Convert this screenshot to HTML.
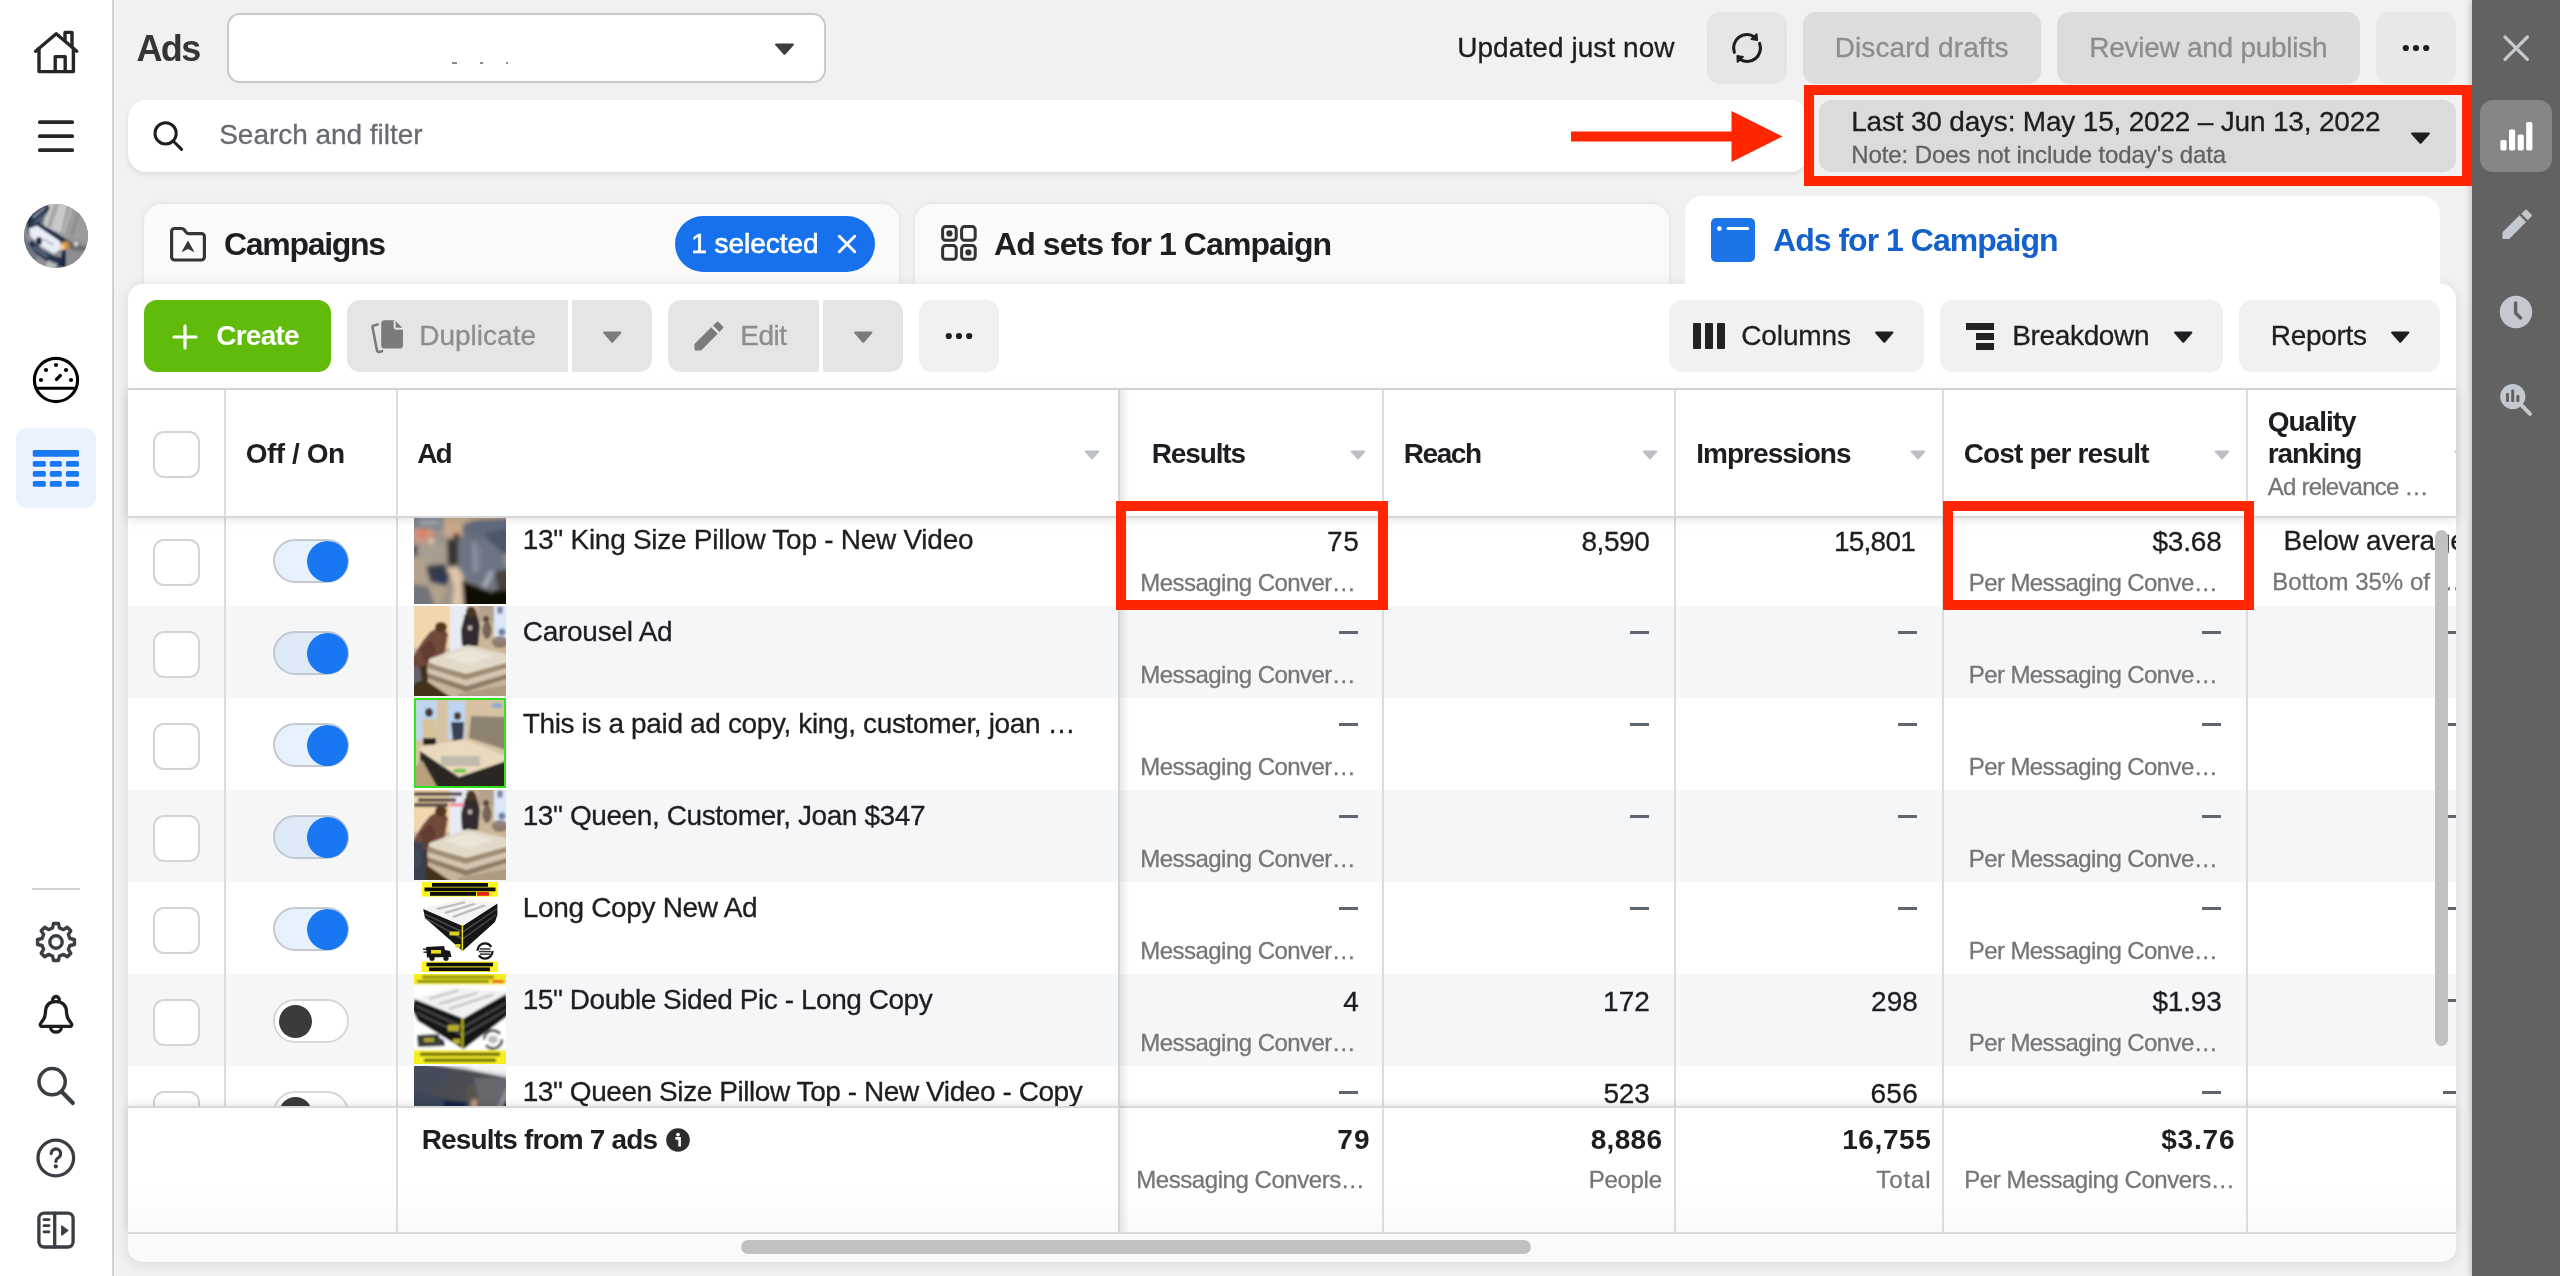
<!DOCTYPE html>
<html lang="en"><head><meta charset="utf-8"><title>Ads Manager</title>
<style>
html,body{margin:0;padding:0;background:#f1f1f1;width:2560px;height:1276px;overflow:hidden}
#root{position:relative;width:2560px;height:1276px;overflow:hidden;background:#f1f1f1;font-family:"Liberation Sans",sans-serif}
.b{position:absolute;display:block}
.t{position:absolute;white-space:pre;font-kerning:normal}
</style></head>
<body><div id="root">
<div class="b" style="left:227px;top:12.5px;width:599px;height:70.5px;background:#fff;border-radius:13px;border:2px solid #c9c9c9;box-sizing:border-box;"></div>
<svg class="b" style="left:774.0px;top:42.5px;" width="21" height="12.5" viewBox="0 0 21 12.5"><path d="M2.2 1.6 H18.8 L10.5 10.7 Z" fill="#3a3d42" stroke="#3a3d42" stroke-width="2.2" stroke-linejoin="round"/></svg>
<div class="b" style="left:452px;top:62px;width:5px;height:1.5px;background:#8a8a8a;"></div><div class="b" style="left:480px;top:62px;width:3px;height:1.5px;background:#8a8a8a;"></div><div class="b" style="left:506px;top:62px;width:2px;height:1.5px;background:#8a8a8a;"></div>
<div class="b" style="left:1707px;top:12px;width:80px;height:72px;background:#e5e5e5;border-radius:13px;"></div>
<svg class="b" style="left:1729px;top:30px;" width="36" height="36" viewBox="0 0 36 36"><g fill="none" stroke="#1e1e1e" stroke-width="3.1" stroke-linecap="round"><path d="M5.33 22.36 A13.4 13.4 0 0 1 25.6 6.9"/><path d="M30.59 13.42 A13.4 13.4 0 0 1 10.4 29.1"/></g><g fill="#1e1e1e" stroke="#1e1e1e" stroke-width="1.8" stroke-linejoin="round"><path d="M27.7 4.2 L28.2 10 L22.4 9.2 Z"/><path d="M8.3 26 L14 26.8 L8.6 31.9 Z"/></g></svg>
<div class="b" style="left:1803px;top:12px;width:238px;height:72px;background:#dcdcdc;border-radius:13px;"></div>
<div class="b" style="left:2057px;top:12px;width:303px;height:72px;background:#dcdcdc;border-radius:13px;"></div>
<div class="b" style="left:2376px;top:12px;width:80px;height:72px;background:#e8e8e8;border-radius:13px;"></div>
<svg class="b" style="left:2400px;top:44px;" width="32" height="8" viewBox="0 0 32 8"><circle cx="5.800000000000001" cy="4" r="3.1" fill="#1c1e21"/><circle cx="15.999999999999998" cy="4" r="3.1" fill="#1c1e21"/><circle cx="26.2" cy="4" r="3.1" fill="#1c1e21"/></svg>
<div class="b" style="left:128px;top:100px;width:1680px;height:72px;background:#fff;border-radius:18px;box-shadow:0 2px 5px rgba(0,0,0,.10);"></div>
<svg class="b" style="left:150px;top:118px;" width="36" height="36" viewBox="0 0 36 36"><g fill="none" stroke="#1c1e21" stroke-width="3" stroke-linecap="round"><circle cx="15.6" cy="15.4" r="10.6"/><path d="M23.4 23.2 L31.6 31.4"/></g></svg>
<div class="b" style="left:1819px;top:100px;width:637px;height:72px;background:#dbdbdb;border-radius:13px;"></div>
<svg class="b" style="left:2409.5px;top:132px;" width="21" height="12.5" viewBox="0 0 21 12.5"><path d="M2.2 1.6 H18.8 L10.5 10.7 Z" fill="#1c1e21" stroke="#1c1e21" stroke-width="2.2" stroke-linejoin="round"/></svg>
<div class="b" style="left:144px;top:204px;width:755px;height:90px;background:linear-gradient(#fafafa 0,#fafafa 82%,#f3f3f3 100%);border-radius:18px 18px 0 0;box-shadow:0 0 6px rgba(0,0,0,.08);"></div>
<div class="b" style="left:915px;top:204px;width:754px;height:90px;background:linear-gradient(#fafafa 0,#fafafa 82%,#f3f3f3 100%);border-radius:18px 18px 0 0;box-shadow:0 0 6px rgba(0,0,0,.08);"></div>
<div class="b" style="left:128px;top:284px;width:2328px;height:978px;background:#fff;border-radius:15px;box-shadow:0 2px 14px rgba(0,0,0,.10);"></div>
<div class="b" style="left:1685px;top:196px;width:755px;height:100px;background:#fff;border-radius:18px 18px 0 0;"></div>
<svg class="b" style="left:168px;top:225px;" width="40" height="38" viewBox="0 0 40 38"><g fill="none" stroke="#363636" stroke-width="3.2" stroke-linejoin="round"><path d="M3.6 6.5 a3 3 0 0 1 3-3 h7.2 a3 3 0 0 1 2.4 1.2 l2 2.7 a3 3 0 0 0 2.4 1.2 h12.8 a3 3 0 0 1 3 3 v20.4 a3 3 0 0 1 -3 3 H6.6 a3 3 0 0 1 -3 -3 Z"/></g><path d="M20 15.4 L26.6 27.2 L20 24 L13.4 27.2 Z" fill="#363636"/></svg>
<div class="b" style="left:675px;top:216px;width:200px;height:56px;background:#1771ed;border-radius:28px;"></div>
<svg class="b" style="left:836px;top:233px;" width="22" height="22" viewBox="0 0 22 22"><path d="M3.3 3.3 L18.7 18.7 M18.7 3.3 L3.3 18.7" stroke="#fff" stroke-width="3" stroke-linecap="round"/></svg>
<svg class="b" style="left:940.5px;top:225px;" width="38" height="38" viewBox="0 0 38 38"><rect x="1.6" y="1.6" width="13.6" height="13.6" rx="3" fill="none" stroke="#333" stroke-width="3"/><circle cx="8.4" cy="8.4" r="3.1" fill="#333"/><rect x="20.6" y="1.6" width="13.6" height="13.6" rx="3" fill="none" stroke="#333" stroke-width="3"/><rect x="1.6" y="20.6" width="13.6" height="13.6" rx="3" fill="none" stroke="#333" stroke-width="3"/><rect x="20.6" y="20.6" width="13.6" height="13.6" rx="3" fill="none" stroke="#333" stroke-width="3"/><circle cx="27.400000000000002" cy="27.400000000000002" r="3.1" fill="#333"/></svg>
<div class="b" style="left:1711px;top:218px;width:44px;height:44px;background:#1b74e8;border-radius:5px;"></div>
<svg class="b" style="left:1711px;top:218px;" width="44" height="44" viewBox="0 0 44 44"><circle cx="8.4" cy="10.6" r="2.4" fill="#fff"/><path d="M17 10.6 H36.6" stroke="#fff" stroke-width="3" stroke-linecap="round"/></svg>
<div class="b" style="left:144px;top:300px;width:187px;height:72px;background:#60bb0b;border-radius:13px;"></div>
<svg class="b" style="left:172px;top:324px;" width="26" height="26" viewBox="0 0 26 26"><path d="M13 2 V24 M2 13 H24" stroke="#fff" stroke-width="3.2" stroke-linecap="round"/></svg>
<div class="b" style="left:347px;top:300px;width:221px;height:72px;background:#e5e5e5;border-radius:13px 2px 2px 13px;"></div>
<div class="b" style="left:572px;top:300px;width:80px;height:72px;background:#e5e5e5;border-radius:2px 13px 13px 2px;"></div>
<svg class="b" style="left:369.8px;top:316.7px;" width="38" height="38" viewBox="0 0 38 38"><g fill="#7b7b7b"><path d="M14.6 3.2 h10.2 l8.2 8.2 v16.8 a3.4 3.4 0 0 1 -3.4 3.4 h-15 a3.4 3.4 0 0 1 -3.4 -3.4 v-21.6 a3.4 3.4 0 0 1 3.4 -3.4 z"/></g><path d="M24.6 3.4 v6 a2.4 2.4 0 0 0 2.4 2.4 h6" fill="none" stroke="#e5e5e5" stroke-width="2"/><path d="M7.6 7.4 L4 8.4 a2 2 0 0 0 -1.4 2.4 L7 33.4 a2 2 0 0 0 2.4 1.5 L12 34.2" fill="none" stroke="#7b7b7b" stroke-width="2.6" stroke-linecap="round"/></svg>
<svg class="b" style="left:601.55px;top:330.5px;" width="20.5" height="12.5" viewBox="0 0 20.5 12.5"><path d="M2.2 1.6 H18.3 L10.25 10.7 Z" fill="#7b7b7b" stroke="#7b7b7b" stroke-width="2.2" stroke-linejoin="round"/></svg>
<div class="b" style="left:668px;top:300px;width:151px;height:72px;background:#e5e5e5;border-radius:13px 2px 2px 13px;"></div>
<div class="b" style="left:823px;top:300px;width:80px;height:72px;background:#e5e5e5;border-radius:2px 13px 13px 2px;"></div>
<svg class="b" style="left:693.5px;top:320.5px;" width="30" height="30" viewBox="0 0 30 30"><g fill="#7b7b7b"><path d="M19 4.6 L22.47 1.13 Q23.6 0 24.73 1.13 L28.82 5.22 Q29.95 6.35 28.82 7.48 L25.35 10.95 Z"/><path d="M17.2 6.2 L23.73 12.73 L7.6 28.9 Q7 29.45 6.2 29.45 L1.5 29.45 Q0.5 29.45 0.5 28.45 L0.5 23.5 Q0.5 22.9 1 22.4 Z"/></g></svg>
<svg class="b" style="left:852.75px;top:330.5px;" width="20.5" height="12.5" viewBox="0 0 20.5 12.5"><path d="M2.2 1.6 H18.3 L10.25 10.7 Z" fill="#7b7b7b" stroke="#7b7b7b" stroke-width="2.2" stroke-linejoin="round"/></svg>
<div class="b" style="left:919px;top:300px;width:80px;height:72px;background:#f1f1f1;border-radius:13px;"></div>
<svg class="b" style="left:943px;top:332px;" width="32" height="8" viewBox="0 0 32 8"><circle cx="5.800000000000001" cy="4" r="3.1" fill="#1c1e21"/><circle cx="15.999999999999998" cy="4" r="3.1" fill="#1c1e21"/><circle cx="26.2" cy="4" r="3.1" fill="#1c1e21"/></svg>
<div class="b" style="left:1669px;top:300px;width:255px;height:72px;background:#f1f1f1;border-radius:13px;"></div>
<div class="b" style="left:1693px;top:323px;width:8.4px;height:26px;background:#222;border-radius:1px;"></div><div class="b" style="left:1704.8px;top:323px;width:8.4px;height:26px;background:#222;border-radius:1px;"></div><div class="b" style="left:1716.6px;top:323px;width:8.4px;height:26px;background:#222;border-radius:1px;"></div>
<svg class="b" style="left:1873.75px;top:330.5px;" width="20.5" height="12.5" viewBox="0 0 20.5 12.5"><path d="M2.2 1.6 H18.3 L10.25 10.7 Z" fill="#1c1e21" stroke="#1c1e21" stroke-width="2.2" stroke-linejoin="round"/></svg>
<div class="b" style="left:1940px;top:300px;width:283px;height:72px;background:#f1f1f1;border-radius:13px;"></div>
<div class="b" style="left:1966px;top:322.5px;width:28px;height:7.4px;background:#222;"></div><div class="b" style="left:1976px;top:333px;width:18px;height:7.2px;background:#222;"></div><div class="b" style="left:1976px;top:343px;width:18px;height:7.2px;background:#222;"></div>
<svg class="b" style="left:2172.55px;top:330.5px;" width="20.5" height="12.5" viewBox="0 0 20.5 12.5"><path d="M2.2 1.6 H18.3 L10.25 10.7 Z" fill="#1c1e21" stroke="#1c1e21" stroke-width="2.2" stroke-linejoin="round"/></svg>
<div class="b" style="left:2239px;top:300px;width:201px;height:72px;background:#f1f1f1;border-radius:13px;"></div>
<svg class="b" style="left:2389.55px;top:330.5px;" width="20.5" height="12.5" viewBox="0 0 20.5 12.5"><path d="M2.2 1.6 H18.3 L10.25 10.7 Z" fill="#1c1e21" stroke="#1c1e21" stroke-width="2.2" stroke-linejoin="round"/></svg>
<div class="b" style="left:128px;top:388px;width:2328px;height:2px;background:#d8d8d8;"></div>
<div class="b" style="left:0;top:0;width:2456px;height:1106px;overflow:hidden;will-change:transform"><div class="b" style="left:128px;top:606px;width:2328px;height:92px;background:#f5f6f7;"></div><div class="b" style="left:128px;top:790px;width:2328px;height:92px;background:#f5f6f7;"></div><div class="b" style="left:128px;top:974px;width:2328px;height:92px;background:#f5f6f7;"></div><div class="b" style="left:223.5px;top:390px;width:2px;height:842px;background:#dcdcdc;"></div><div class="b" style="left:395.5px;top:390px;width:2px;height:842px;background:#dcdcdc;"></div><div class="b" style="left:1382px;top:390px;width:2px;height:842px;background:#dcdcdc;"></div><div class="b" style="left:1674px;top:390px;width:2px;height:842px;background:#dcdcdc;"></div><div class="b" style="left:1942px;top:390px;width:2px;height:842px;background:#dcdcdc;"></div><div class="b" style="left:2245.5px;top:390px;width:2px;height:842px;background:#dcdcdc;"></div><div class="b" style="left:152.5px;top:538.5px;width:47px;height:47px;background:#fff;border-radius:11px;border:2px solid #d4d4d4;box-sizing:border-box;"></div><div class="b" style="left:273px;top:539px;width:76px;height:44px;background:rgba(24,119,242,.10);border-radius:22px;border:2px solid #c3c8d0;box-sizing:border-box;"></div><div class="b" style="left:306.5px;top:540.5px;width:41px;height:41px;background:#1877f2;border-radius:21px;"></div><div class="b" style="left:414px;top:514px;width:92px;height:90px;overflow:hidden"><svg width="92" height="90" viewBox="0 0 92 90" style="display:block"><defs><filter id="bf1" x="-10%" y="-10%" width="120%" height="120%"><feGaussianBlur stdDeviation="1.9"/></filter></defs><rect width="92" height="90" fill="#888"/><g filter="url(#bf1)"><rect x="-4" y="-4" width="100" height="98" fill="#9d938a"/><rect x="-4" y="-4" width="32" height="20" fill="#80878f"/><path d="M4 6 L24 4 L26 10 L8 12 Z" fill="#a3a8ae" opacity="0.8"/><rect x="-4" y="15" width="24" height="14" fill="#c6957e"/><ellipse cx="8.5" cy="19" rx="4.5" ry="3.4" fill="#ee7362" opacity="0.9"/><ellipse cx="17.3" cy="27.3" rx="2.4" ry="2" fill="#e8decd"/><rect x="30" y="-4" width="18" height="27" fill="#c8a98a"/><rect x="46" y="-4" width="50" height="14" fill="#c7aa8c"/><path d="M49 10 L60 6 L96 4 L96 40 L49 38 Z" fill="#616b7c"/><path d="M72 18 L96 14 L96 40 L76 40 Z" fill="#4e5769"/><rect x="-4" y="29" width="36" height="20" fill="#a99d91"/><rect x="-4" y="31" width="8" height="11" fill="#5b5d62"/><path d="M-4 46 L12 44 L34 72 L24 94 L-4 94 Z" fill="#b3a08e"/><path d="M-4 70 L14 72 L22 94 L-4 94 Z" fill="#727479"/><path d="M33 26 L47 23 L50 50 L34 53 Z" fill="#38362f"/><ellipse cx="42.4" cy="21.6" rx="3.4" ry="2.8" fill="#6a3f30"/><path d="M44 26 L56 22 L74 26 L90 40 L92 60 L78 78 L52 66 L44 50 Z" fill="#6d7484"/><path d="M58.6 29 L62 29 L63 58 L59.6 59 Z" fill="#9da3ad" opacity="0.85"/><path d="M64 33 L66.6 33 L67.6 56 L65 56 Z" fill="#878e9a" opacity="0.7"/><path d="M76 56 L80 58 L72 75 L68 72 Z" fill="#aeb2ba" opacity="0.9"/><path d="M12 52 L30 50 L36 62 L32 72 L16 68 Z" fill="#353b4b"/><ellipse cx="29" cy="66" rx="5" ry="4" fill="#2b3b5e"/><path d="M33 54 L42 53 L48 60 L50 72 L52 94 L38 94 L40 72 L36 62 Z" fill="#dcc5aa"/><path d="M48 66 L78 78 L84 74 L96 72 L96 96 L50 96 Z" fill="#0b0906"/><path d="M81 58 L96 54 L96 76 L84 77 Z" fill="#4b4139"/></g></svg></div><div class="b" style="left:152.5px;top:630.5px;width:47px;height:47px;background:#fff;border-radius:11px;border:2px solid #d4d4d4;box-sizing:border-box;"></div><div class="b" style="left:273px;top:631px;width:76px;height:44px;background:rgba(24,119,242,.10);border-radius:22px;border:2px solid #c3c8d0;box-sizing:border-box;"></div><div class="b" style="left:306.5px;top:632.5px;width:41px;height:41px;background:#1877f2;border-radius:21px;"></div><div class="b" style="left:414px;top:606px;width:92px;height:90px;overflow:hidden"><svg width="92" height="90" viewBox="0 0 92 90" style="display:block"><defs><filter id="bf2" x="-10%" y="-10%" width="120%" height="120%"><feGaussianBlur stdDeviation="1.3"/></filter></defs><rect width="92" height="90" fill="#888"/><g filter="url(#bf2)"><rect x="-4" y="-4" width="100" height="98" fill="#cbb698"/><rect x="-4" y="-4" width="42" height="46" fill="#f1d6ae"/><rect x="36" y="-4" width="17" height="50" fill="#e7ebf4"/><rect x="64" y="-4" width="18" height="20" fill="#b5a28d"/><rect x="80" y="-4" width="16" height="40" fill="#dbe7f6"/><ellipse cx="88" cy="26" rx="3.6" ry="3.6" fill="#566a94" opacity="0.8"/><ellipse cx="86" cy="4" rx="3" ry="4" fill="#6a5a8a" opacity="0.7"/><path d="M51 8 L62 5 L66 20 L64 40 L48 40 L47 24 Z" fill="#302c2f"/><ellipse cx="57" cy="6" rx="5" ry="5.4" fill="#4a3628"/><ellipse cx="56" cy="22" rx="2.4" ry="2.4" fill="#d8d0c8" opacity="0.8"/><ellipse cx="73" cy="24" rx="4.6" ry="9" fill="#6a5a50" opacity="0.9"/><ellipse cx="72" cy="13" rx="3" ry="3" fill="#4a3a30" opacity="0.9"/><ellipse cx="86" cy="36" rx="8" ry="6" fill="#7d6c60" opacity="0.8"/><path d="M-2 52 L8 36 L16 26 L28 19 L34 28 L31 46 L20 58 L4 70 L-4 72 Z" fill="#71483a"/><ellipse cx="27" cy="21" rx="6" ry="5" fill="#55361f"/><path d="M6 44 L16 34 L22 44 L12 58 Z" fill="#5a3428" opacity="0.7"/><path d="M15 53 L54 39 L96 49 L96 56 L52 68 L15 57 Z" fill="#e2d9c8"/><path d="M30 50 L54 43 L80 50 L54 58 Z" fill="#efe9de" opacity="0.7"/><path d="M13 57 L52 68 L96 56 L96 61 L52 74 L13 62 Z" fill="#9f8c74"/><path d="M13 62 L52 74 L96 61 L96 67 L52 80 L13 67 Z" fill="#d3c6b1"/><path d="M13 67 L52 80 L96 67 L96 72 L52 86 L13 72 Z" fill="#8f7d66"/><path d="M13 72 L52 86 L96 72 L96 96 L12 96 Z" fill="#c6b59c"/><path d="M44 88 L96 78 L96 96 L44 96 Z" fill="#a8957c" opacity="0.8"/><path d="M-4 66 L13 58 L14 76 L44 96 L-4 96 Z" fill="#43331f"/><path d="M-4 60 L6 62 L8 74 L-4 80 Z" fill="#6b6f7c" opacity="0.8"/></g></svg></div><div class="b" style="left:152.5px;top:722.5px;width:47px;height:47px;background:#fff;border-radius:11px;border:2px solid #d4d4d4;box-sizing:border-box;"></div><div class="b" style="left:273px;top:723px;width:76px;height:44px;background:rgba(24,119,242,.10);border-radius:22px;border:2px solid #c3c8d0;box-sizing:border-box;"></div><div class="b" style="left:306.5px;top:724.5px;width:41px;height:41px;background:#1877f2;border-radius:21px;"></div><div class="b" style="left:414px;top:698px;width:92px;height:90px;overflow:hidden"><svg width="92" height="90" viewBox="0 0 92 90" style="display:block"><defs><filter id="bf3" x="-10%" y="-10%" width="120%" height="120%"><feGaussianBlur stdDeviation="1.1"/></filter></defs><rect width="92" height="90" fill="#888"/><g filter="url(#bf3)"><rect x="-4" y="-4" width="100" height="98" fill="#d6c2a2"/><rect x="2" y="2" width="21" height="40" fill="#bdd7f3"/><rect x="34" y="3" width="17" height="38" fill="#bdd7f3"/><path d="M57 18 L92 19 L92 52 L55 40 Z" fill="#8e8271"/><rect x="78" y="5" width="10" height="5" fill="#7aa6d8" opacity="0.8"/><ellipse cx="15" cy="14.5" rx="4" ry="4.5" fill="#4a3a30"/><path d="M8 21 L22 21 L23 40 L9 41 Z" fill="#d8c298"/><rect x="9" y="40" width="13" height="7" fill="#28221e"/><ellipse cx="43.5" cy="18" rx="3.6" ry="4" fill="#4a3a30"/><path d="M37 24 L50 24 L49 44 L39 44 Z" fill="#3a4152"/><path d="M6 49 L50 41 L92 58 L92 63 L45 79 L6 53 Z" fill="#ead9bd"/><path d="M6 53 L45 79 L92 63 L92 94 L22 94 L6 66 Z" fill="#2c2822"/><path d="M0 70 L8 62 L26 94 L0 94 Z" fill="#b7a07a"/><rect x="27" y="58" width="39" height="10" fill="#bdb7ad" opacity="0.9"/><rect x="40" y="71" width="12" height="3.4" fill="#44c52c"/></g><rect x="1" y="1" width="90" height="88" fill="none" stroke="#2fe41c" stroke-width="2"/></svg></div><div class="b" style="left:152.5px;top:814.5px;width:47px;height:47px;background:#fff;border-radius:11px;border:2px solid #d4d4d4;box-sizing:border-box;"></div><div class="b" style="left:273px;top:815px;width:76px;height:44px;background:rgba(24,119,242,.10);border-radius:22px;border:2px solid #c3c8d0;box-sizing:border-box;"></div><div class="b" style="left:306.5px;top:816.5px;width:41px;height:41px;background:#1877f2;border-radius:21px;"></div><div class="b" style="left:414px;top:790px;width:92px;height:90px;overflow:hidden"><svg width="92" height="90" viewBox="0 0 92 90" style="display:block"><defs><filter id="bf4" x="-10%" y="-10%" width="120%" height="120%"><feGaussianBlur stdDeviation="1.3"/></filter></defs><rect width="92" height="90" fill="#888"/><g filter="url(#bf4)"><rect x="-4" y="-4" width="100" height="98" fill="#cbb698"/><rect x="-4" y="-4" width="42" height="46" fill="#f1d6ae"/><rect x="36" y="-4" width="17" height="50" fill="#e7ebf4"/><rect x="64" y="-4" width="18" height="20" fill="#b5a28d"/><rect x="80" y="-4" width="16" height="40" fill="#dbe7f6"/><ellipse cx="88" cy="26" rx="3.6" ry="3.6" fill="#566a94" opacity="0.8"/><ellipse cx="86" cy="4" rx="3" ry="4" fill="#6a5a8a" opacity="0.7"/><path d="M51 8 L62 5 L66 20 L64 40 L48 40 L47 24 Z" fill="#302c2f"/><ellipse cx="57" cy="6" rx="5" ry="5.4" fill="#4a3628"/><ellipse cx="56" cy="22" rx="2.4" ry="2.4" fill="#d8d0c8" opacity="0.8"/><ellipse cx="73" cy="24" rx="4.6" ry="9" fill="#6a5a50" opacity="0.9"/><ellipse cx="72" cy="13" rx="3" ry="3" fill="#4a3a30" opacity="0.9"/><ellipse cx="86" cy="36" rx="8" ry="6" fill="#7d6c60" opacity="0.8"/><path d="M-2 52 L8 36 L16 26 L28 19 L34 28 L31 46 L20 58 L4 70 L-4 72 Z" fill="#71483a"/><ellipse cx="27" cy="21" rx="6" ry="5" fill="#55361f"/><path d="M6 44 L16 34 L22 44 L12 58 Z" fill="#5a3428" opacity="0.7"/><path d="M15 53 L54 39 L96 49 L96 56 L52 68 L15 57 Z" fill="#e2d9c8"/><path d="M30 50 L54 43 L80 50 L54 58 Z" fill="#efe9de" opacity="0.7"/><path d="M13 57 L52 68 L96 56 L96 61 L52 74 L13 62 Z" fill="#9f8c74"/><path d="M13 62 L52 74 L96 61 L96 67 L52 80 L13 67 Z" fill="#d3c6b1"/><path d="M13 67 L52 80 L96 67 L96 72 L52 86 L13 72 Z" fill="#8f7d66"/><path d="M13 72 L52 86 L96 72 L96 96 L12 96 Z" fill="#c6b59c"/><path d="M44 88 L96 78 L96 96 L44 96 Z" fill="#a8957c" opacity="0.8"/><path d="M-4 66 L13 58 L14 76 L44 96 L-4 96 Z" fill="#43331f"/><path d="M-4 60 L6 62 L8 74 L-4 80 Z" fill="#6b6f7c" opacity="0.8"/><rect x="0" y="2" width="48" height="4" fill="#4c4138" opacity="0.9"/><rect x="4" y="8" width="38" height="4" fill="#4c4138" opacity="0.9"/><rect x="0" y="13" width="34" height="4" fill="#4c4138" opacity="0.9"/><rect x="36" y="13" width="14" height="3.5" fill="#f08aa0"/><path d="M-4 52 L10 52 L12 96 L-4 96 Z" fill="#3b4254" opacity="0.9"/></g></svg></div><div class="b" style="left:152.5px;top:906.5px;width:47px;height:47px;background:#fff;border-radius:11px;border:2px solid #d4d4d4;box-sizing:border-box;"></div><div class="b" style="left:273px;top:907px;width:76px;height:44px;background:rgba(24,119,242,.10);border-radius:22px;border:2px solid #c3c8d0;box-sizing:border-box;"></div><div class="b" style="left:306.5px;top:908.5px;width:41px;height:41px;background:#1877f2;border-radius:21px;"></div><div class="b" style="left:414px;top:882px;width:92px;height:90px;overflow:hidden"><svg width="92" height="90" viewBox="0 0 92 90" style="display:block"><defs><filter id="bf5"><feGaussianBlur stdDeviation="0.45"/></filter></defs><g filter="url(#bf5)"><rect x="0" y="0" width="92" height="90" fill="#fff"/><rect x="7.7" y="0" width="76.4" height="14.6" fill="#fcf51d"/><rect x="18" y="1.0" width="56" height="3.8" fill="#111"/><rect x="10.5" y="5.5" width="71" height="3.8" fill="#111"/><rect x="16" y="10.0" width="46" height="3.8" fill="#111"/><rect x="63" y="10.0" width="12" height="3.8" fill="#e8200c"/><path d="M9.2 27 L48.7 44 L83.4 21.5 L83.4 33 L81 40 L48.7 69 L11 36 Z" fill="#141414"/><path d="M9.2 26.4 L49.4 16.7 L83.4 21.1 L48.7 43.5 Z" fill="#f3f3f3"/><path d="M22 26 L50 19.5 L52 21 L24 28 Z" fill="#bdbdbd"/><path d="M30 30 L60 21 L62 22.6 L32 32 Z" fill="#bdbdbd"/><path d="M38 34 L70 22.4 L72 24 L40 36 Z" fill="#bdbdbd"/><path d="M10 31 L48.7 49 L83 26 L83 27.4 L48.7 51 L10 32.6 Z" fill="#4a4a4a"/><path d="M11 35 L48.7 56 L82 32 L82 33.4 L48.7 58 L11 36.6 Z" fill="#4a4a4a"/><rect x="47.6" y="42.7" width="1.5" height="26" fill="#e8de1a"/><rect x="35.5" y="49.5" width="10" height="4" fill="#d9cf1c"/><rect x="41.5" y="62" width="5" height="3.6" fill="#d9cf1c"/><path d="M12 65 L30 64 L31 68 L36 69 L37.5 75 L13 75.6 Z" fill="#151515"/><ellipse cx="18" cy="76.2" rx="2.6" ry="2.6" fill="#151515"/><ellipse cx="32" cy="76.2" rx="2.6" ry="2.6" fill="#151515"/><rect x="9" y="66.5" width="6" height="1.3" fill="#151515"/><rect x="9.5" y="69.5" width="5" height="1.3" fill="#151515"/><rect x="17" y="68" width="10" height="3.6" fill="#e8de1a"/><circle cx="71" cy="69" r="7.6" fill="none" stroke="#151515" stroke-width="2.2" stroke-dasharray="19 5"/><rect x="65.6" y="66.2" width="10.8" height="1.5" fill="#333"/><rect x="65" y="68.8" width="12" height="1.5" fill="#333"/><rect x="66" y="71.4" width="10" height="1.5" fill="#333"/><rect x="7.7" y="79.5" width="76.4" height="10.5" fill="#fcf51d"/><rect x="12.5" y="80.7" width="66.5" height="3.7" fill="#111"/><rect x="15" y="85.4" width="61" height="3.7" fill="#111"/></g></svg></div><div class="b" style="left:152.5px;top:998.5px;width:47px;height:47px;background:#fff;border-radius:11px;border:2px solid #d4d4d4;box-sizing:border-box;"></div><div class="b" style="left:273px;top:999px;width:76px;height:44px;background:#fff;border-radius:22px;border:2px solid #d7d7d7;box-sizing:border-box;"></div><div class="b" style="left:279px;top:1004.5px;width:33px;height:33px;background:#3b3b3b;border-radius:17px;"></div><div class="b" style="left:414px;top:974px;width:92px;height:90px;overflow:hidden"><svg width="92" height="90" viewBox="0 0 92 90" style="display:block"><defs><filter id="bf6" x="-10%" y="-10%" width="120%" height="120%"><feGaussianBlur stdDeviation="1.0"/></filter></defs><rect width="92" height="90" fill="#888"/><g filter="url(#bf6)"><rect x="-4" y="-4" width="100" height="98" fill="#fff"/><rect x="-4" y="-4" width="100" height="14.6" fill="#f5ef22"/><rect x="8" y="1.6" width="72" height="3" fill="#8a8612"/><rect x="3" y="6" width="72" height="3" fill="#8a8612"/><rect x="78" y="6" width="12" height="3" fill="#e8452c"/><path d="M0.3 25 L49.4 44.5 L92 18.5 L96 40 L49.4 75.2 L4 47 L-2 35 Z" fill="#161616"/><path d="M0.3 24.6 L39 13.4 L96 17.9 L49.4 43.9 Z" fill="#f2f2f2"/><path d="M14 24 L44 15.5 L46 17 L16 26 Z" fill="#c4c4c4"/><path d="M24 29 L62 18 L64 20 L26 31 Z" fill="#c4c4c4"/><path d="M34 34 L78 19.6 L80 21.4 L36 36 Z" fill="#c4c4c4"/><path d="M2 31 L49.4 52 L94 27 L94 29 L49.4 54.4 L2 33 Z" fill="#4c4c4c"/><path d="M3 38 L49.4 60 L94 34 L94 36 L49.4 62.4 L3 40 Z" fill="#4c4c4c"/><rect x="47.4" y="44" width="2" height="31" fill="#c9c11c"/><rect x="34" y="51" width="11" height="6" fill="#b5ae2a"/><rect x="39" y="65" width="7" height="5" fill="#b5ae2a"/><path d="M3 61 L24 60 L26 64 L30 66 L31 72 L4 73 Z" fill="#3c3c3c"/><rect x="10" y="64" width="10" height="4" fill="#a59f2c"/><circle cx="79" cy="65.5" r="9" fill="none" stroke="#5a5a5a" stroke-width="3" stroke-dasharray="22 6"/><ellipse cx="79" cy="65.5" rx="5" ry="4" fill="#bdbdbd"/><rect x="-4" y="76" width="100" height="18" fill="#f5ef22"/><rect x="6" y="78.6" width="80" height="3.4" fill="#6e6a10"/><rect x="10" y="84.6" width="72" height="3.4" fill="#6e6a10"/></g></svg></div><div class="b" style="left:152.5px;top:1090.5px;width:47px;height:47px;background:#fff;border-radius:11px;border:2px solid #d4d4d4;box-sizing:border-box;"></div><div class="b" style="left:273px;top:1091px;width:76px;height:44px;background:#fff;border-radius:22px;border:2px solid #d7d7d7;box-sizing:border-box;"></div><div class="b" style="left:279px;top:1096.5px;width:33px;height:33px;background:#3b3b3b;border-radius:17px;"></div><div class="b" style="left:414px;top:1066px;width:92px;height:90px;overflow:hidden"><svg width="92" height="90" viewBox="0 0 92 90" style="display:block"><defs><filter id="bf7" x="-10%" y="-10%" width="120%" height="120%"><feGaussianBlur stdDeviation="1.6"/></filter></defs><rect width="92" height="90" fill="#888"/><g filter="url(#bf7)"><rect x="-4" y="-4" width="100" height="98" fill="#4b4d53"/><path d="M-4 -4 L40 -4 L30 20 L-4 34 Z" fill="#454c59"/><path d="M-4 24 L30 32 L52 44 L-4 44 Z" fill="#3b4659"/><path d="M14 -2 L50 3 L96 12 L96 -4 L14 -6 Z" fill="#dfe2e8"/><path d="M44 -4 L96 -4 L96 7 L60 3 Z" fill="#f6f6f6"/><path d="M60 12 L96 12 L96 44 L66 44 Z" fill="#66686d"/><path d="M30 34 L52 36 L54 46 L28 46 Z" fill="#172748"/><ellipse cx="60" cy="37" rx="3.6" ry="5" fill="#c9a68a"/><ellipse cx="58" cy="28" rx="7" ry="9" fill="#6a5848" opacity="0.45"/><path d="M82 44 L92 22 L96 24 L96 44 Z" fill="#8e9094"/><path d="M86 44 L94 32 L96 44 Z" fill="#151515"/></g></svg></div><div class="b" style="left:1339px;top:631px;width:19px;height:3px;background:#5f6670;"></div><div class="b" style="left:1630px;top:631px;width:19px;height:3px;background:#5f6670;"></div><div class="b" style="left:1898px;top:631px;width:19px;height:3px;background:#5f6670;"></div><div class="b" style="left:2202px;top:631px;width:19px;height:3px;background:#5f6670;"></div><div class="b" style="left:2443px;top:631px;width:19px;height:3px;background:#5f6670;"></div><div class="b" style="left:1339px;top:723px;width:19px;height:3px;background:#5f6670;"></div><div class="b" style="left:1630px;top:723px;width:19px;height:3px;background:#5f6670;"></div><div class="b" style="left:1898px;top:723px;width:19px;height:3px;background:#5f6670;"></div><div class="b" style="left:2202px;top:723px;width:19px;height:3px;background:#5f6670;"></div><div class="b" style="left:2443px;top:723px;width:19px;height:3px;background:#5f6670;"></div><div class="b" style="left:1339px;top:815px;width:19px;height:3px;background:#5f6670;"></div><div class="b" style="left:1630px;top:815px;width:19px;height:3px;background:#5f6670;"></div><div class="b" style="left:1898px;top:815px;width:19px;height:3px;background:#5f6670;"></div><div class="b" style="left:2202px;top:815px;width:19px;height:3px;background:#5f6670;"></div><div class="b" style="left:2443px;top:815px;width:19px;height:3px;background:#5f6670;"></div><div class="b" style="left:1339px;top:907px;width:19px;height:3px;background:#5f6670;"></div><div class="b" style="left:1630px;top:907px;width:19px;height:3px;background:#5f6670;"></div><div class="b" style="left:1898px;top:907px;width:19px;height:3px;background:#5f6670;"></div><div class="b" style="left:2202px;top:907px;width:19px;height:3px;background:#5f6670;"></div><div class="b" style="left:2443px;top:907px;width:19px;height:3px;background:#5f6670;"></div><div class="b" style="left:2443px;top:999px;width:19px;height:3px;background:#5f6670;"></div><div class="b" style="left:1339px;top:1091px;width:19px;height:3px;background:#5f6670;"></div><div class="b" style="left:2202px;top:1091px;width:19px;height:3px;background:#5f6670;"></div><div class="b" style="left:2443px;top:1091px;width:19px;height:3px;background:#5f6670;"></div><div class="t" style="font-size:28px;line-height:36px;top:522.0px;letter-spacing:-0.27px;color:#1c1e21;-webkit-text-stroke-width:0.3px;left:522.7px;">13&quot; King Size Pillow Top - New Video</div><div class="t" style="font-size:28px;line-height:36px;top:523.5px;letter-spacing:0.74px;color:#1c1e21;-webkit-text-stroke-width:0.3px;left:1326.9px;">75</div><div class="t" style="font-size:28px;line-height:36px;top:523.5px;letter-spacing:-0.42px;color:#1c1e21;-webkit-text-stroke-width:0.3px;left:1581.4px;">8,590</div><div class="t" style="font-size:28px;line-height:36px;top:523.5px;letter-spacing:-0.75px;color:#1c1e21;-webkit-text-stroke-width:0.3px;left:1833.9px;">15,801</div><div class="t" style="font-size:28px;line-height:36px;top:523.5px;letter-spacing:-0.17px;color:#1c1e21;-webkit-text-stroke-width:0.3px;left:2152.4px;">$3.68</div><div class="t" style="font-size:24px;line-height:31px;top:566.9px;letter-spacing:-0.54px;color:#757678;-webkit-text-stroke-width:0.3px;left:1140.3px;">Messaging Conver…</div><div class="t" style="font-size:24px;line-height:31px;top:566.9px;letter-spacing:-0.59px;color:#757678;-webkit-text-stroke-width:0.3px;left:1968.8px;">Per Messaging Conve…</div><div class="t" style="font-size:28px;line-height:36px;top:614.0px;letter-spacing:-0.26px;color:#1c1e21;-webkit-text-stroke-width:0.3px;left:522.7px;">Carousel Ad</div><div class="t" style="font-size:24px;line-height:31px;top:658.9px;letter-spacing:-0.54px;color:#757678;-webkit-text-stroke-width:0.3px;left:1140.3px;">Messaging Conver…</div><div class="t" style="font-size:24px;line-height:31px;top:658.9px;letter-spacing:-0.59px;color:#757678;-webkit-text-stroke-width:0.3px;left:1968.8px;">Per Messaging Conve…</div><div class="t" style="font-size:28px;line-height:36px;top:706.0px;letter-spacing:-0.36px;color:#1c1e21;-webkit-text-stroke-width:0.3px;left:522.7px;">This is a paid ad copy, king, customer, joan …</div><div class="t" style="font-size:24px;line-height:31px;top:750.9px;letter-spacing:-0.54px;color:#757678;-webkit-text-stroke-width:0.3px;left:1140.3px;">Messaging Conver…</div><div class="t" style="font-size:24px;line-height:31px;top:750.9px;letter-spacing:-0.59px;color:#757678;-webkit-text-stroke-width:0.3px;left:1968.8px;">Per Messaging Conve…</div><div class="t" style="font-size:28px;line-height:36px;top:798.0px;letter-spacing:-0.41px;color:#1c1e21;-webkit-text-stroke-width:0.3px;left:522.7px;">13&quot; Queen, Customer, Joan $347</div><div class="t" style="font-size:24px;line-height:31px;top:842.9px;letter-spacing:-0.54px;color:#757678;-webkit-text-stroke-width:0.3px;left:1140.3px;">Messaging Conver…</div><div class="t" style="font-size:24px;line-height:31px;top:842.9px;letter-spacing:-0.59px;color:#757678;-webkit-text-stroke-width:0.3px;left:1968.8px;">Per Messaging Conve…</div><div class="t" style="font-size:28px;line-height:36px;top:890.0px;letter-spacing:-0.32px;color:#1c1e21;-webkit-text-stroke-width:0.3px;left:522.7px;">Long Copy New Ad</div><div class="t" style="font-size:24px;line-height:31px;top:934.9px;letter-spacing:-0.54px;color:#757678;-webkit-text-stroke-width:0.3px;left:1140.3px;">Messaging Conver…</div><div class="t" style="font-size:24px;line-height:31px;top:934.9px;letter-spacing:-0.59px;color:#757678;-webkit-text-stroke-width:0.3px;left:1968.8px;">Per Messaging Conve…</div><div class="t" style="font-size:28px;line-height:36px;top:982.0px;letter-spacing:-0.45px;color:#1c1e21;-webkit-text-stroke-width:0.3px;left:522.7px;">15&quot; Double Sided Pic - Long Copy</div><div class="t" style="font-size:28px;line-height:36px;top:983.5px;letter-spacing:0.00px;color:#1c1e21;-webkit-text-stroke-width:0.3px;left:1343.3px;">4</div><div class="t" style="font-size:28px;line-height:36px;top:983.5px;letter-spacing:0.00px;color:#1c1e21;-webkit-text-stroke-width:0.3px;left:1603.1px;">172</div><div class="t" style="font-size:28px;line-height:36px;top:983.5px;letter-spacing:0.00px;color:#1c1e21;-webkit-text-stroke-width:0.3px;left:1871.1px;">298</div><div class="t" style="font-size:28px;line-height:36px;top:983.5px;letter-spacing:-0.17px;color:#1c1e21;-webkit-text-stroke-width:0.3px;left:2152.4px;">$1.93</div><div class="t" style="font-size:24px;line-height:31px;top:1026.9px;letter-spacing:-0.54px;color:#757678;-webkit-text-stroke-width:0.3px;left:1140.3px;">Messaging Conver…</div><div class="t" style="font-size:24px;line-height:31px;top:1026.9px;letter-spacing:-0.59px;color:#757678;-webkit-text-stroke-width:0.3px;left:1968.8px;">Per Messaging Conve…</div><div class="t" style="font-size:28px;line-height:36px;top:1074.0px;letter-spacing:-0.43px;color:#1c1e21;-webkit-text-stroke-width:0.3px;left:522.7px;">13&quot; Queen Size Pillow Top - New Video - Copy</div><div class="t" style="font-size:28px;line-height:36px;top:1075.5px;letter-spacing:-0.16px;color:#1c1e21;-webkit-text-stroke-width:0.3px;left:1603.4px;">523</div><div class="t" style="font-size:28px;line-height:36px;top:1075.5px;letter-spacing:0.34px;color:#1c1e21;-webkit-text-stroke-width:0.3px;left:1870.4px;">656</div><div class="t" style="font-size:28px;line-height:36px;top:523.2px;letter-spacing:-0.24px;color:#1c1e21;-webkit-text-stroke-width:0.3px;left:2283.5px;">Below average</div><div class="t" style="font-size:24px;line-height:31px;top:566.1px;letter-spacing:0.02px;color:#757678;-webkit-text-stroke-width:0.3px;left:2272.3px;">Bottom 35% of …</div></div>
<div class="b" style="left:2435px;top:530px;width:12.5px;height:516px;background:#c1c1c1;border-radius:6.5px;"></div>
<div class="b" style="left:128px;top:390px;width:2328px;height:126px;background:#fff;box-shadow:0 2px 0 #d6d6d6, 0 3px 10px rgba(0,0,0,.13);"></div>
<div class="b" style="left:223.5px;top:390px;width:2px;height:126px;background:#dcdcdc;"></div>
<div class="b" style="left:395.5px;top:390px;width:2px;height:126px;background:#dcdcdc;"></div>
<div class="b" style="left:1382px;top:390px;width:2px;height:126px;background:#dcdcdc;"></div>
<div class="b" style="left:1674px;top:390px;width:2px;height:126px;background:#dcdcdc;"></div>
<div class="b" style="left:1942px;top:390px;width:2px;height:126px;background:#dcdcdc;"></div>
<div class="b" style="left:2245.5px;top:390px;width:2px;height:126px;background:#dcdcdc;"></div>
<div class="b" style="left:152.5px;top:430.5px;width:47px;height:47px;background:#fff;border-radius:11px;border:2px solid #d4d4d4;box-sizing:border-box;"></div>
<svg class="b" style="left:1084px;top:450px;" width="16" height="10" viewBox="0 0 16 10"><path d="M1.4 1.4 H14.6 L8 8.6 Z" fill="#bcc0c8" stroke="#bcc0c8" stroke-width="1.6" stroke-linejoin="round"/></svg>
<svg class="b" style="left:1350px;top:450px;" width="16" height="10" viewBox="0 0 16 10"><path d="M1.4 1.4 H14.6 L8 8.6 Z" fill="#bcc0c8" stroke="#bcc0c8" stroke-width="1.6" stroke-linejoin="round"/></svg>
<svg class="b" style="left:1642px;top:450px;" width="16" height="10" viewBox="0 0 16 10"><path d="M1.4 1.4 H14.6 L8 8.6 Z" fill="#bcc0c8" stroke="#bcc0c8" stroke-width="1.6" stroke-linejoin="round"/></svg>
<svg class="b" style="left:1910px;top:450px;" width="16" height="10" viewBox="0 0 16 10"><path d="M1.4 1.4 H14.6 L8 8.6 Z" fill="#bcc0c8" stroke="#bcc0c8" stroke-width="1.6" stroke-linejoin="round"/></svg>
<svg class="b" style="left:2214px;top:450px;" width="16" height="10" viewBox="0 0 16 10"><path d="M1.4 1.4 H14.6 L8 8.6 Z" fill="#bcc0c8" stroke="#bcc0c8" stroke-width="1.6" stroke-linejoin="round"/></svg>
<div class="b" style="left:2450px;top:448px;width:6px;height:14px;overflow:hidden"><svg class="b" style="left:4px;top:2px;" width="16" height="10" viewBox="0 0 16 10"><path d="M1.4 1.4 H14.6 L8 8.6 Z" fill="#bcc0c8" stroke="#bcc0c8" stroke-width="1.6" stroke-linejoin="round"/></svg></div>
<div class="b" style="left:128px;top:1108px;width:2328px;height:124px;background:#fff;box-shadow:0 -2px 0 #d8d8d8, 0 -3px 9px rgba(0,0,0,.12);"></div>
<div class="b" style="left:128px;top:1190px;width:2328px;height:42px;background:linear-gradient(rgba(250,250,250,0),#fafafa);"></div>
<div class="b" style="left:395.5px;top:1108px;width:2px;height:124px;background:#dcdcdc;"></div>
<div class="b" style="left:1382px;top:1108px;width:2px;height:124px;background:#dcdcdc;"></div>
<div class="b" style="left:1674px;top:1108px;width:2px;height:124px;background:#dcdcdc;"></div>
<div class="b" style="left:1942px;top:1108px;width:2px;height:124px;background:#dcdcdc;"></div>
<div class="b" style="left:2245.5px;top:1108px;width:2px;height:124px;background:#dcdcdc;"></div>
<div class="b" style="left:128px;top:1232px;width:2328px;height:2px;background:#d8d8d8;"></div>
<div class="b" style="left:128px;top:1234px;width:2328px;height:28px;background:#fafafa;border-radius:0 0 15px 15px;"></div>
<div class="b" style="left:741px;top:1240px;width:790px;height:14px;background:#c1c1c1;border-radius:7px;"></div>
<svg class="b" style="left:666px;top:1128px;" width="24" height="24" viewBox="0 0 24 24"><circle cx="12" cy="12" r="11.8" fill="#2d2d2d"/><circle cx="12" cy="6.6" r="1.9" fill="#fff"/><path d="M9.4 10.4 h4.2 v8.2" fill="none" stroke="#fff" stroke-width="2.6"/></svg>
<div class="b" style="left:1118px;top:390px;width:2px;height:842px;background:#d2d5da;"></div>
<div class="b" style="left:1120px;top:390px;width:9px;height:842px;background:linear-gradient(90deg,rgba(0,0,0,.09),rgba(0,0,0,0));"></div>
<div class="b" style="left:0px;top:0px;width:112px;height:1276px;background:#fff;box-shadow:1px 0 0 #d4d4d4, 2px 0 0 #cfcfcf;"></div>
<svg class="b" style="left:30px;top:26px;" width="52" height="52" viewBox="0 0 52 52"><g fill="none" stroke="#262626" stroke-width="3.4" stroke-linejoin="round" stroke-linecap="round"><path d="M5.6 25.2 L26.2 7.8 L46.8 25.2"/><path d="M9 22.8 V45.6 H43.4 V22.8"/><path d="M35 14.4 V6.4 H42 V20.8"/><path d="M25.2 45.6 V30.6 H35.2 V45.6"/></g></svg>
<svg class="b" style="left:34px;top:116px;" width="44" height="40" viewBox="0 0 44 40"><path d="M5.8 6.2 H38.2 M5.8 20.2 H38.2 M5.8 34.2 H38.2" stroke="#262626" stroke-width="3.8" stroke-linecap="round"/></svg>
<div class="b" style="left:24px;top:204px;width:64px;height:64px;border-radius:50%;overflow:hidden"><svg width="64" height="64" viewBox="0 0 64 64" style="display:block"><defs><filter id="bf8" x="-10%" y="-10%" width="120%" height="120%"><feGaussianBlur stdDeviation="0.8"/></filter></defs><rect width="64" height="64" fill="#888"/><g filter="url(#bf8)"><rect x="-4" y="-4" width="72" height="72" fill="#8d8f93"/><path d="M22 -4 L50 -4 L38 30 L20 22 Z" fill="#c9c9c9"/><path d="M44 -2 L70 6 L70 40 L36 32 Z" fill="#9c9c9c"/><path d="M30 0 L35 0 L27 24 L23 22 Z" fill="#a6a6a6"/><path d="M46 2 L49 3 L41 30 L38 29 Z" fill="#b8b8b8" opacity="0.8"/><path d="M54 6 L57 7 L49 32 L46 31 Z" fill="#8a8a8a" opacity="0.8"/><path d="M2 14 L22 -2 L26 4 L16 20 L4 30 Z" fill="#23324c"/><path d="M8 12 L20 2 L22 4 L10 15 Z" fill="#8a93a2" opacity="0.8"/><path d="M8 20 L22 8 L24 10 L10 23 Z" fill="#6f7a8c" opacity="0.7"/><path d="M6 22 L14 18 L40 34 L48 40 L46 44 L12 26 Z" fill="#1e2c46"/><path d="M4.7 24.8 L12.9 21.6 L36 37.3 L37.3 44.8 L29.8 49.8 L17.2 42.3 L6.6 32.3 Z" fill="#e9edf6"/><ellipse cx="15" cy="37" rx="3.2" ry="4" fill="#26324a"/><path d="M20 34 L30 40 L29 42 L19 36 Z" fill="#aeb6c6" opacity="0.8"/><path d="M8 36 L18 46 L30 52 L40 54 L42 64 L30 62 L12 50 L4 40 Z" fill="#27354f"/><path d="M10 42 L24 52 L23 54 L9 44 Z" fill="#7d8798" opacity="0.7"/><path d="M38 46 L42 46 L42 62 L36 62 Z" fill="#1e2c46"/><ellipse cx="41" cy="41.6" rx="5" ry="4.4" fill="#cb8e3c"/><ellipse cx="38" cy="43" rx="3" ry="3" fill="#f0d8b8" opacity="0.8"/><path d="M0 30 L6 42 L14 54 L6 60 L-2 50 Z" fill="#6e7684"/><path d="M24 56 L34 60 L30 66 L20 66 Z" fill="#c9c9c9" opacity="0.8"/><path d="M46 38 L66 44 L66 48 L46 46 Z" fill="#5f6064" opacity="0.7"/><ellipse cx="52" cy="40" rx="2.2" ry="2.2" fill="#e2e2e2" opacity="0.85"/></g></svg></div>
<svg class="b" style="left:30px;top:354px;" width="52" height="52" viewBox="0 0 52 52"><g fill="none" stroke="#000" stroke-width="3.1"><circle cx="26" cy="26" r="21.6"/><path d="M5.4 34.2 H46.6"/></g><path d="M26.5 25.4 L30.3 21.6" stroke="#000" stroke-width="3.4" stroke-linecap="round"/><g fill="#000"><circle cx="11" cy="26" r="2.1"/><circle cx="16" cy="16" r="2.1"/><circle cx="26" cy="11" r="2.1"/><circle cx="36" cy="16" r="2.1"/><circle cx="41" cy="26" r="2.1"/></g></svg>
<div class="b" style="left:16px;top:428px;width:80px;height:80px;background:#ebf2fd;border-radius:11px;"></div>
<svg class="b" style="left:32px;top:450px;" width="48" height="38" viewBox="0 0 48 38"><rect x="0.8" y="0" width="46.2" height="6.8" rx="1.6" fill="#1877f2"/><rect x="0.8" y="11" width="13" height="5.8" rx="1.6" fill="#1877f2"/><rect x="17.8" y="11" width="12" height="5.8" rx="1.6" fill="#1877f2"/><rect x="34" y="11" width="13" height="5.8" rx="1.6" fill="#1877f2"/><rect x="0.8" y="21" width="13" height="5.8" rx="1.6" fill="#1877f2"/><rect x="17.8" y="21" width="12" height="5.8" rx="1.6" fill="#1877f2"/><rect x="34" y="21" width="13" height="5.8" rx="1.6" fill="#1877f2"/><rect x="0.8" y="31" width="13" height="5.8" rx="1.6" fill="#1877f2"/><rect x="17.8" y="31" width="12" height="5.8" rx="1.6" fill="#1877f2"/><rect x="34" y="31" width="13" height="5.8" rx="1.6" fill="#1877f2"/></svg>
<div class="b" style="left:32px;top:888px;width:48px;height:2px;background:#d2d2d2;"></div>
<svg class="b" style="left:30px;top:915.5px;" width="52" height="52" viewBox="0 0 52 52"><path d="M22.51 12.03 L23.50 7.57 L28.50 7.57 L29.49 12.03 L33.41 13.65 L37.26 11.20 L40.80 14.74 L38.35 18.59 L39.97 22.51 L44.43 23.50 L44.43 28.50 L39.97 29.49 L38.35 33.41 L40.80 37.26 L37.26 40.80 L33.41 38.35 L29.49 39.97 L28.50 44.43 L23.50 44.43 L22.51 39.97 L18.59 38.35 L14.74 40.80 L11.20 37.26 L13.65 33.41 L12.03 29.49 L7.57 28.50 L7.57 23.50 L12.03 22.51 L13.65 18.59 L11.20 14.74 L14.74 11.20 L18.59 13.65 Z" fill="none" stroke="#393e44" stroke-width="3.4" stroke-linejoin="round"/><circle cx="26" cy="26" r="6.2" fill="none" stroke="#393e44" stroke-width="3.4"/></svg>
<svg class="b" style="left:32px;top:990px;" width="48" height="48" viewBox="0 0 48 48"><g fill="none" stroke="#1e1e1e" stroke-width="3.3" stroke-linejoin="round" stroke-linecap="round"><path d="M24 11.6 C16 11.6 13.4 17 13.4 23 C13.4 27 12.6 28.6 9.6 32 C7.4 34.4 8 36.4 10.6 36.4 H37.4 C40 36.4 40.6 34.4 38.4 32 C35.4 28.6 34.6 27 34.6 23 C34.6 17 32 11.6 24 11.6 Z"/><path d="M20.8 10.6 A3.3 3.3 0 1 1 27.2 10.6"/><path d="M18.6 37.2 A5.4 4.9 0 0 0 29.4 37.2"/></g></svg>
<svg class="b" style="left:32px;top:1062px;" width="48" height="48" viewBox="0 0 48 48"><g fill="none" stroke="#393e44" stroke-linecap="round"><circle cx="20.1" cy="19.7" r="13.1" stroke-width="3.5"/><path d="M30 30.1 L40.8 40.9" stroke-width="4.2"/></g></svg>
<svg class="b" style="left:32px;top:1133px;" width="48" height="48" viewBox="0 0 48 48"><circle cx="23.8" cy="25" r="17.8" fill="none" stroke="#393e44" stroke-width="3.3"/><path d="M19.2 20.6 a4.7 4.7 0 1 1 7.4 3.9 c-1.7 1.1 -2.7 2 -2.7 3.9" fill="none" stroke="#393e44" stroke-width="3.1" stroke-linecap="round"/><circle cx="23.8" cy="33.4" r="2.1" fill="#393e44"/></svg>
<svg class="b" style="left:32px;top:1206px;" width="48" height="48" viewBox="0 0 48 48"><g fill="none" stroke="#393e44" stroke-width="3.3" stroke-linejoin="round" stroke-linecap="round"><rect x="6.9" y="7.2" width="34.2" height="33.8" rx="5.2"/><path d="M22.7 7.2 V41"/><path d="M12 13.6 H17 M12 19.7 H17 M12 25.8 H17" stroke-width="2.8"/></g><path d="M29.8 20 L35.8 24.5 L29.8 29 Z" fill="#393e44" stroke="#393e44" stroke-width="1.4" stroke-linejoin="round"/></svg>
<div class="b" style="left:2472px;top:0px;width:88px;height:1276px;background:#626262;box-shadow:-2px 0 6px rgba(0,0,0,.18);"></div>
<svg class="b" style="left:2502px;top:34px;" width="28" height="28" viewBox="0 0 28 28"><path d="M3 3 L25.4 25.4 M25.4 3 L3 25.4" stroke="#c4c9d0" stroke-width="3.2" stroke-linecap="round"/></svg>
<div class="b" style="left:2480px;top:100px;width:72px;height:72px;background:#868686;border-radius:13px;"></div>
<svg class="b" style="left:2498px;top:118px;" width="36" height="36" viewBox="0 0 36 36"><g fill="#fff"><rect x="2.4" y="22" width="6.2" height="10.4" rx="1.6"/><rect x="11" y="11.4" width="6.2" height="21" rx="1.6"/><rect x="19.6" y="16.4" width="6.2" height="16" rx="1.6"/><rect x="28.2" y="4" width="6.2" height="28.4" rx="1.6"/></g></svg>
<svg class="b" style="left:2501.5px;top:208.5px;" width="30.5" height="30.5" viewBox="0 0 30 30"><g fill="#c4c9d0"><path d="M19 4.6 L22.47 1.13 Q23.6 0 24.73 1.13 L28.82 5.22 Q29.95 6.35 28.82 7.48 L25.35 10.95 Z"/><path d="M17.2 6.2 L23.73 12.73 L7.6 28.9 Q7 29.45 6.2 29.45 L1.5 29.45 Q0.5 29.45 0.5 28.45 L0.5 23.5 Q0.5 22.9 1 22.4 Z"/></g></svg>
<svg class="b" style="left:2498px;top:294px;" width="36" height="36" viewBox="0 0 36 36"><circle cx="18" cy="18" r="16.2" fill="#c4c9d0"/><path d="M17.6 9 V19 L22.6 24" fill="none" stroke="#626262" stroke-width="3.4" stroke-linecap="round" stroke-linejoin="round"/></svg>
<svg class="b" style="left:2496px;top:380px;" width="40" height="40" viewBox="0 0 40 40"><circle cx="16.8" cy="16.6" r="12.6" fill="#c4c9d0"/><path d="M26.4 26.2 L34 33.8" stroke="#c4c9d0" stroke-width="4" stroke-linecap="round"/><g fill="#626262"><rect x="10" y="13" width="3" height="9" rx="1"/><rect x="15.2" y="9.6" width="3" height="12.4" rx="1"/><rect x="20.4" y="15" width="3" height="7" rx="1"/></g></svg>
<div class="b" style="left:1804px;top:85px;width:668px;height:101px;border:10px solid #ff2600;box-sizing:border-box;"></div>
<div class="b" style="left:1116px;top:501px;width:272px;height:108.5px;border:10px solid #ff2600;box-sizing:border-box;"></div>
<div class="b" style="left:1943px;top:501px;width:311px;height:109px;border:10px solid #ff2600;box-sizing:border-box;"></div>
<svg class="b" style="left:1560px;top:100px;" width="240" height="74" viewBox="0 0 240 74"><path d="M11 31.5 H171.5 V11 L222.5 36.5 L171.5 62 V41.5 H11 Z" fill="#ff2600"/></svg>
<div class="b" style="left:0;top:0;width:2560px;height:1276px;will-change:transform"><div class="t" style="font-size:36px;line-height:47px;top:24.7px;letter-spacing:-1.56px;color:#353535;font-weight:bold;left:136.4px;">Ads</div><div class="t" style="font-size:28px;line-height:36px;top:30.0px;letter-spacing:0.07px;color:#1c1e21;-webkit-text-stroke-width:0.3px;left:1457.2px;">Updated just now</div><div class="t" style="font-size:28px;line-height:36px;top:30.0px;letter-spacing:0.09px;color:#8d8d8d;-webkit-text-stroke-width:0.3px;left:1834.7px;">Discard drafts</div><div class="t" style="font-size:28px;line-height:36px;top:30.0px;letter-spacing:-0.26px;color:#8d8d8d;-webkit-text-stroke-width:0.3px;left:2089.2px;">Review and publish</div><div class="t" style="font-size:28px;line-height:36px;top:117.4px;letter-spacing:-0.03px;color:#676b71;-webkit-text-stroke-width:0.3px;left:219.2px;">Search and filter</div><div class="t" style="font-size:28px;line-height:36px;top:104.0px;letter-spacing:-0.19px;color:#1c1e21;-webkit-text-stroke-width:0.3px;left:1851.2px;">Last 30 days: May 15, 2022 – Jun 13, 2022</div><div class="t" style="font-size:24px;line-height:31px;top:138.9px;letter-spacing:-0.10px;color:#626262;-webkit-text-stroke-width:0.3px;left:1851.3px;">Note: Does not include today's data</div><div class="t" style="font-size:32px;line-height:42px;top:223.3px;letter-spacing:-1.30px;color:#1c1e21;font-weight:bold;left:224.0px;">Campaigns</div><div class="t" style="font-size:28px;line-height:36px;top:225.5px;letter-spacing:-0.03px;color:#fff;left:691.2px;-webkit-text-stroke:0.6px #fff;">1 selected</div><div class="t" style="font-size:32px;line-height:42px;top:223.3px;letter-spacing:-0.92px;color:#1c1e21;font-weight:bold;left:994.0px;">Ad sets for 1 Campaign</div><div class="t" style="font-size:32px;line-height:42px;top:219.3px;letter-spacing:-0.98px;color:#1461cc;font-weight:bold;left:1773.0px;">Ads for 1 Campaign</div><div class="t" style="font-size:28px;line-height:36px;top:317.5px;letter-spacing:-0.75px;color:#fff;font-weight:bold;left:216.2px;">Create</div><div class="t" style="font-size:28px;line-height:36px;top:318.0px;letter-spacing:0.02px;color:#8d8d8d;-webkit-text-stroke-width:0.3px;left:419.2px;">Duplicate</div><div class="t" style="font-size:28px;line-height:36px;top:318.0px;letter-spacing:-0.45px;color:#8d8d8d;-webkit-text-stroke-width:0.3px;left:740.2px;">Edit</div><div class="t" style="font-size:28px;line-height:36px;top:318.0px;letter-spacing:-0.10px;color:#1c1e21;-webkit-text-stroke-width:0.3px;left:1741.2px;">Columns</div><div class="t" style="font-size:28px;line-height:36px;top:318.0px;letter-spacing:-0.34px;color:#1c1e21;-webkit-text-stroke-width:0.3px;left:2012.2px;">Breakdown</div><div class="t" style="font-size:28px;line-height:36px;top:318.0px;letter-spacing:-0.27px;color:#1c1e21;-webkit-text-stroke-width:0.3px;left:2270.7px;">Reports</div><div class="t" style="font-size:28px;line-height:36px;top:436.0px;letter-spacing:-0.47px;color:#1c1e21;font-weight:bold;left:245.7px;">Off / On</div><div class="t" style="font-size:28px;line-height:36px;top:436.0px;letter-spacing:-1.93px;color:#1c1e21;font-weight:bold;left:417.2px;">Ad</div><div class="t" style="font-size:28px;line-height:36px;top:436.0px;letter-spacing:-1.13px;color:#1c1e21;font-weight:bold;left:1151.7px;">Results</div><div class="t" style="font-size:28px;line-height:36px;top:436.0px;letter-spacing:-1.41px;color:#1c1e21;font-weight:bold;left:1403.7px;">Reach</div><div class="t" style="font-size:28px;line-height:36px;top:436.0px;letter-spacing:-0.96px;color:#1c1e21;font-weight:bold;left:1696.2px;">Impressions</div><div class="t" style="font-size:28px;line-height:36px;top:436.0px;letter-spacing:-0.84px;color:#1c1e21;font-weight:bold;left:1963.7px;">Cost per result</div><div class="t" style="font-size:28px;line-height:36px;top:404.0px;letter-spacing:-1.00px;color:#1c1e21;font-weight:bold;left:2267.7px;">Quality</div><div class="t" style="font-size:28px;line-height:36px;top:435.8px;letter-spacing:-1.07px;color:#1c1e21;font-weight:bold;left:2267.7px;">ranking</div><div class="t" style="font-size:24px;line-height:31px;top:470.7px;letter-spacing:-0.78px;color:#757678;-webkit-text-stroke-width:0.3px;left:2267.8px;">Ad relevance …</div><div class="t" style="font-size:28px;line-height:36px;top:1122.0px;letter-spacing:-0.83px;color:#1c1e21;font-weight:bold;left:421.7px;">Results from 7 ads</div><div class="t" style="font-size:28px;line-height:36px;top:1122.0px;letter-spacing:1.20px;color:#1c1e21;font-weight:bold;left:1337.2px;">79</div><div class="t" style="font-size:28px;line-height:36px;top:1122.0px;letter-spacing:0.33px;color:#1c1e21;font-weight:bold;left:1590.7px;">8,886</div><div class="t" style="font-size:28px;line-height:36px;top:1122.0px;letter-spacing:0.61px;color:#1c1e21;font-weight:bold;left:1842.2px;">16,755</div><div class="t" style="font-size:28px;line-height:36px;top:1122.0px;letter-spacing:0.83px;color:#1c1e21;font-weight:bold;left:2161.2px;">$3.76</div><div class="t" style="font-size:24px;line-height:31px;top:1164.4px;letter-spacing:-0.45px;color:#757678;-webkit-text-stroke-width:0.3px;left:1136.3px;">Messaging Convers…</div><div class="t" style="font-size:24px;line-height:31px;top:1164.4px;letter-spacing:-0.31px;color:#757678;-webkit-text-stroke-width:0.3px;left:1588.8px;">People</div><div class="t" style="font-size:24px;line-height:31px;top:1164.4px;letter-spacing:0.87px;color:#757678;-webkit-text-stroke-width:0.3px;left:1876.3px;">Total</div><div class="t" style="font-size:24px;line-height:31px;top:1164.4px;letter-spacing:-0.46px;color:#757678;-webkit-text-stroke-width:0.3px;left:1964.3px;">Per Messaging Convers…</div></div>
</div></body></html>
